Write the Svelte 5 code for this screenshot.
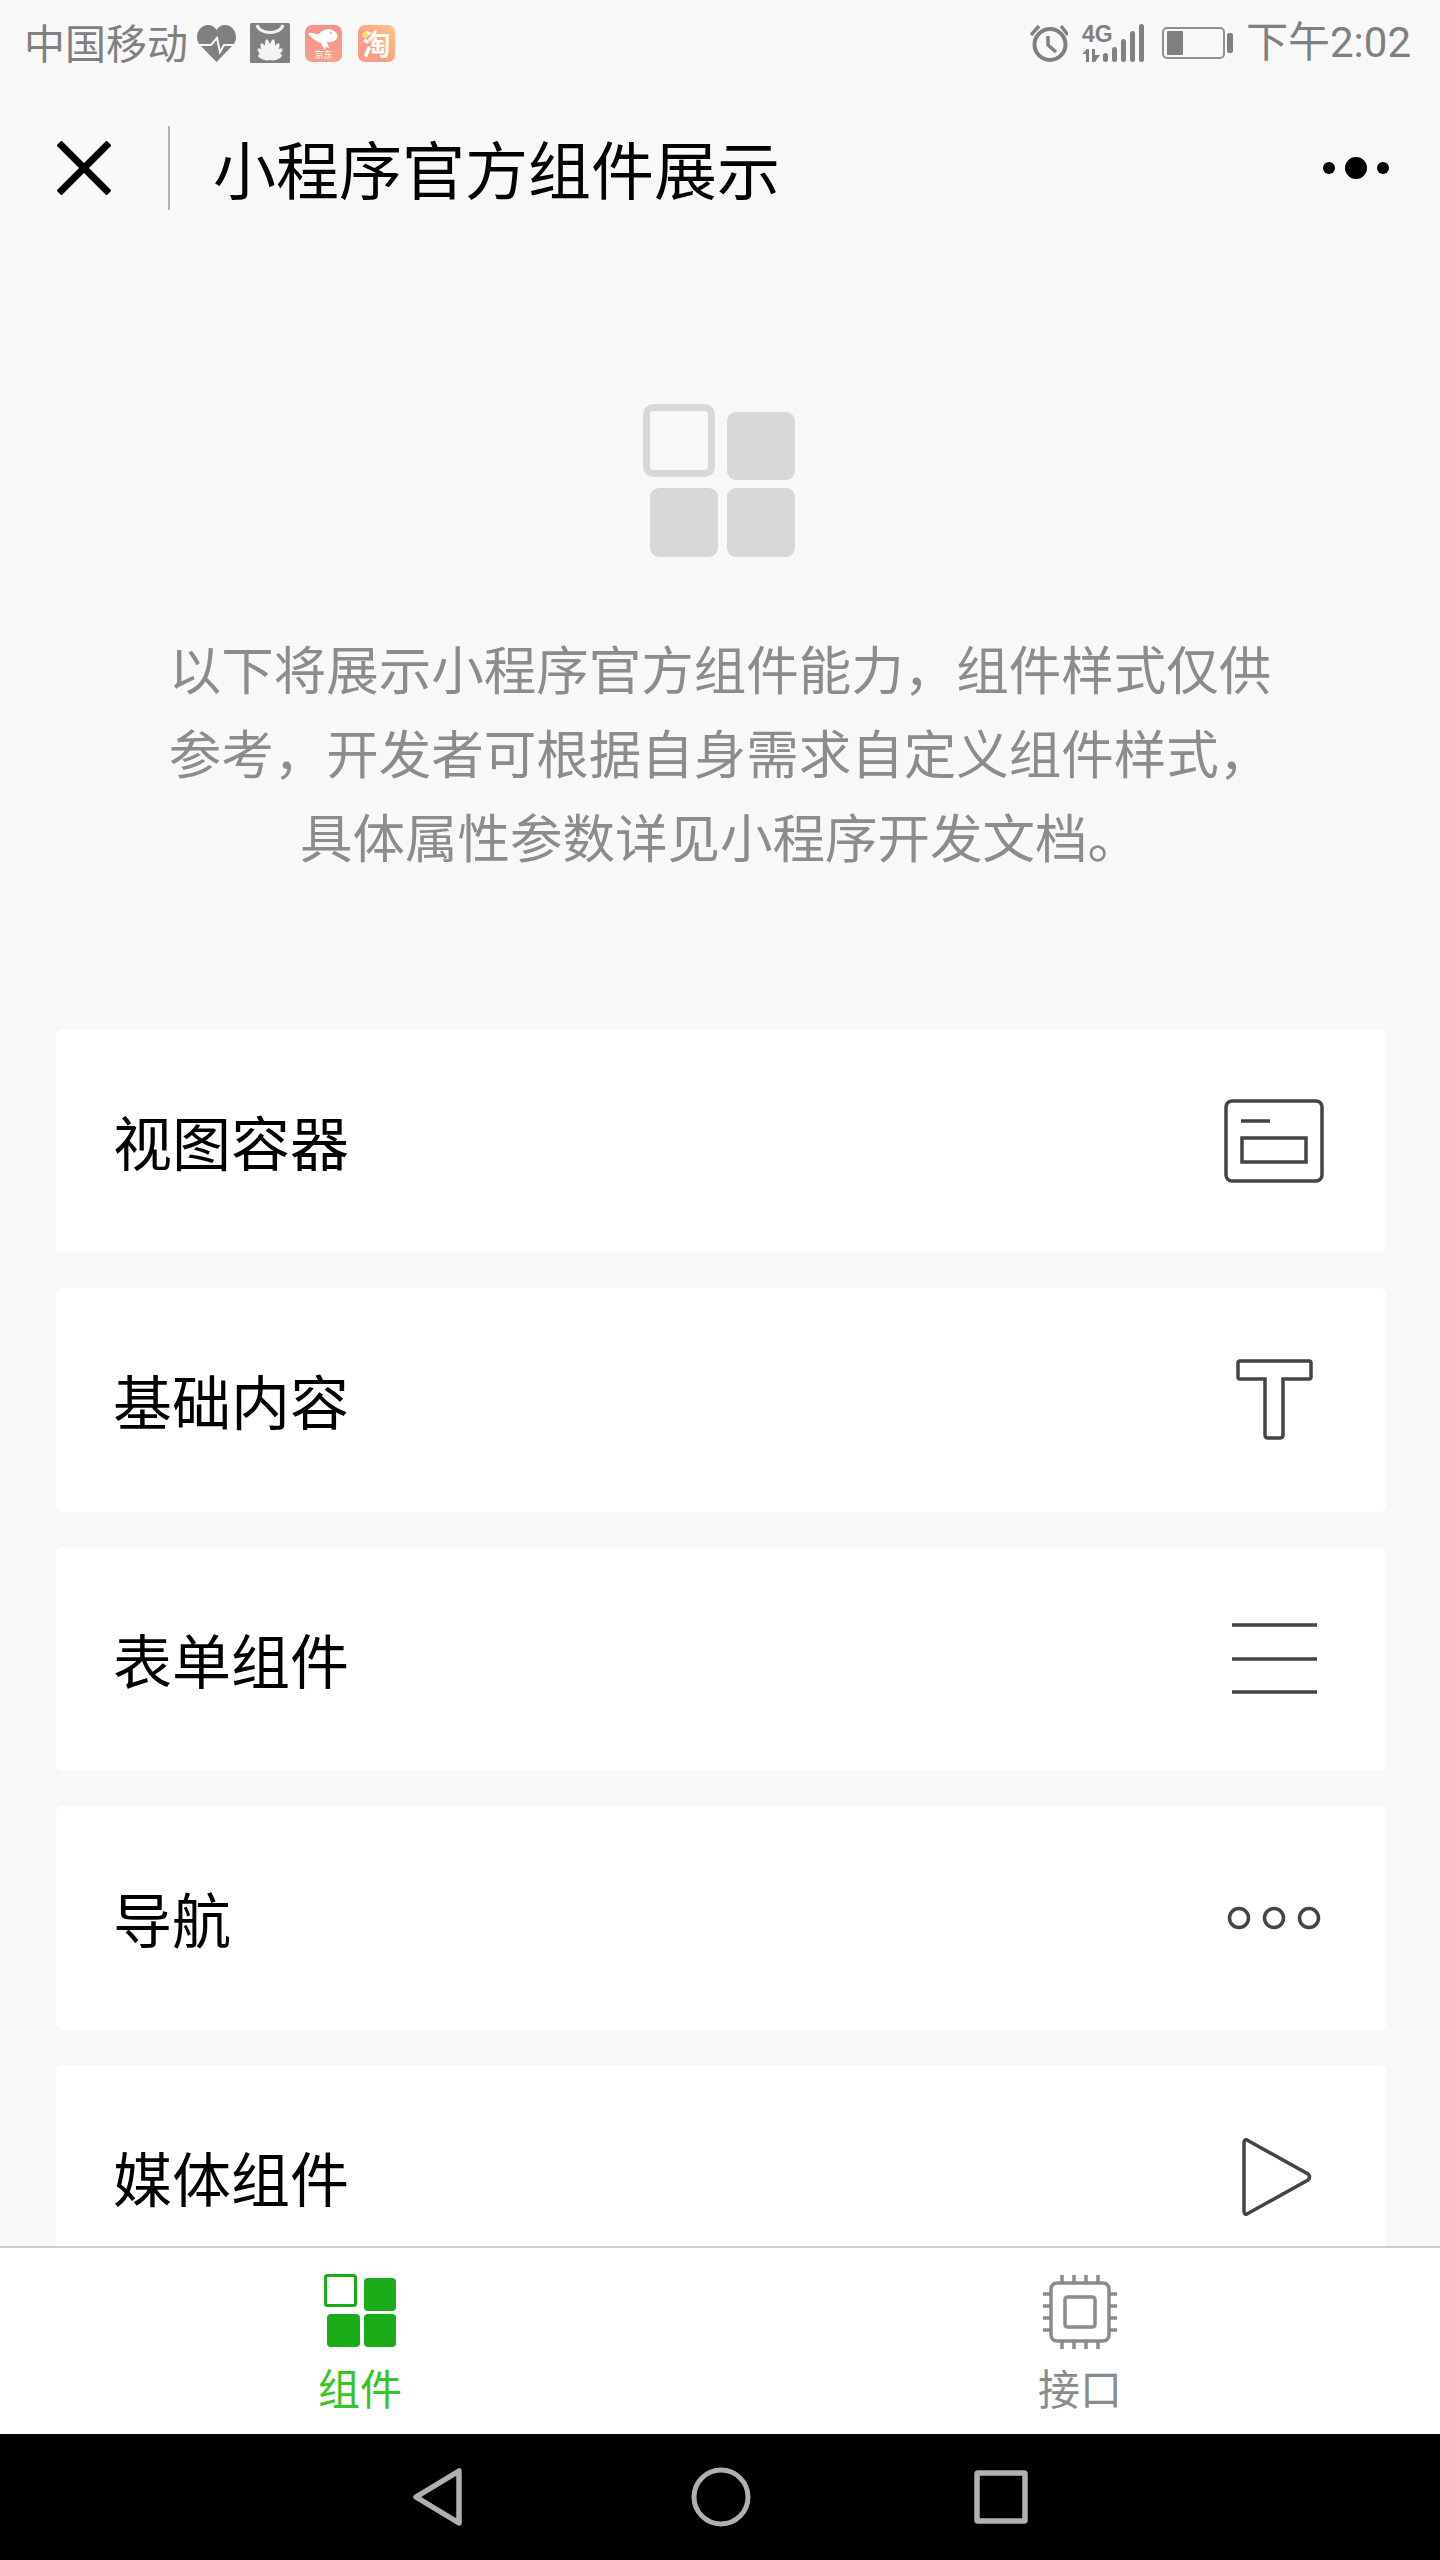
<script>
  const cards = [
    { name: '视图容器', icon: 'view' },
    { name: '基础内容', icon: 'text' },
    { name: '表单组件', icon: 'form' },
    { name: '导航', icon: 'nav' },
    { name: '媒体组件', icon: 'media' }
  ];
  const petals = [
    { a: -72, cy: 30, ry: 6.5 },
    { a: -50, cy: 28, ry: 8 },
    { a: -30, cy: 27, ry: 9 },
    { a: -10, cy: 26, ry: 10 },
    { a: 10, cy: 26, ry: 10 },
    { a: 30, cy: 27, ry: 9 },
    { a: 50, cy: 28, ry: 8 },
    { a: 72, cy: 30, ry: 6.5 }
  ];
</script>

<div class="page">
  <header class="status">
    <div class="status-left">
      <span class="carrier">中国移动</span>
      <svg class="s-heart" viewBox="0 0 39 37">
        <path d="M19.5 37 L2 19 C-3 11 2 0 11 0 C15 0 18 2 19.5 5 C21 2 24 0 28 0 C37 0 42 11 37 19 Z" fill="#808080" />
        <path d="M0 20 H14 L20 13 L23 27 L27 20 H39" fill="none" stroke="#f8f8f8" stroke-width="2" />
      </svg>
      <svg class="s-hw" viewBox="0 0 40 40">
        <rect width="40" height="40" rx="1.5" fill="#808080" />
        <path d="M7 2 C10 12 30 12 33 2" fill="none" stroke="#f4f4f4" stroke-width="3" />
        {#each petals as p}
          <ellipse cx="20" cy={p.cy} rx="2.8" ry={p.ry} fill="#f4f4f4" transform="rotate({p.a} 20 36)" />
        {/each}
      </svg>
      <div class="s-app jd">
        <svg viewBox="0 0 37 25">
          <path d="M3 9 C7 5 12 12 15 8 C19 3 29 3 32 9 C34 13 30 17 25 17 L22 17 L24 23 L21 22 L20 25 L18 22 L16 18 C12 17 8 14 3 9 Z" fill="#fff" />
          <circle cx="26" cy="8" r="1" fill="#f6968a" />
        </svg>
        <span>京东</span>
      </div>
      <div class="s-app tb"><i></i><span>淘</span></div>
    </div>
    <div class="status-right">
      <svg class="s-alarm" viewBox="0 0 38 38">
        <circle cx="20" cy="20.5" r="15.5" fill="none" stroke="#808080" stroke-width="4" />
        <path d="M18 12 V21 L26 28" fill="none" stroke="#808080" stroke-width="3.5" />
        <path d="M1 11 L9 2 M38 11 L31 2" stroke="#808080" stroke-width="3.5" />
      </svg>
      <div class="s-net">
        <div class="net-col">
          <span class="net-label">4G</span>
          <svg viewBox="0 0 20 13">
            <path d="M0 5 L5 0 H7 V13 H4 V5 Z M10 0 H13 V6 L18 6 L13 13 H10 Z" fill="#808080" />
          </svg>
        </div>
        <svg class="net-bars" viewBox="0 0 41 38">
          <g fill="#808080">
            <rect x="0" y="29" width="5" height="9" rx="2.5" />
            <rect x="9" y="23" width="5" height="15" rx="2.5" />
            <rect x="18" y="15" width="5" height="23" rx="2.5" />
            <rect x="27" y="7" width="5" height="31" rx="2.5" />
            <rect x="36" y="0" width="5" height="38" rx="2.5" />
          </g>
        </svg>
      </div>
      <div class="s-batt"><div class="batt-body"><div class="batt-fill"></div></div><div class="batt-tip"></div></div>
      <span class="clock">下午2:02</span>
    </div>
  </header>

  <nav class="topbar">
    <svg class="close" viewBox="0 0 54 54">
      <path d="M2 2 L52 52 M52 2 L2 52" stroke="#000" stroke-width="7" fill="none" />
    </svg>
    <div class="divider"></div>
    <div class="title">小程序官方组件展示</div>
    <div class="more"><i></i><b></b><i></i></div>
  </nav>

  <main class="content">
    <section class="intro">
      <svg class="logo" viewBox="0 0 152 153">
        <rect x="3.5" y="3.5" width="65" height="66" rx="7" fill="none" stroke="#d8d8d8" stroke-width="7" />
        <rect x="84" y="8" width="68" height="68" rx="9" fill="#d8d8d8" />
        <rect x="7" y="84" width="68" height="69" rx="9" fill="#d8d8d8" />
        <rect x="84" y="84" width="68" height="69" rx="9" fill="#d8d8d8" />
      </svg>
      <p class="desc">以下将展示小程序官方组件能力，组件样式仅供<br />参考，开发者可根据自身需求自定义组件样式，<br />具体属性参数详见小程序开发文档。</p>
    </section>

    <div class="list">
      {#each cards as card}
        <div class="card">
          <span class="name">{card.name}</span>
          <svg class="card-icon" viewBox="0 0 100 100" fill="none" stroke="#444" stroke-width="3.5">
            {#if card.icon === 'view'}
              <rect x="2" y="10" width="96" height="80" rx="6" />
              <path d="M17 30 H46" />
              <rect x="18" y="47" width="64" height="24" />
            {:else if card.icon === 'text'}
              <path d="M16 11 H85 Q87 11 87 13 V27 Q87 29 85 29 H59 V85 Q59 88 56 88 H44 Q41 88 41 85 V29 H16 Q14 29 14 27 V13 Q14 11 16 11 Z" />
            {:else if card.icon === 'form'}
              <path d="M8 16 H93 M8 50 H93 M8 83 H93" />
            {:else if card.icon === 'nav'}
              <circle cx="15" cy="50" r="9.5" />
              <circle cx="50" cy="50" r="9.5" />
              <circle cx="85" cy="50" r="9.5" />
            {:else}
              <path d="M23 13 L84 47 Q87 50 84 53 L23 87 Q20 88 20 84 V16 Q20 12 23 13 Z" />
            {/if}
          </svg>
        </div>
      {/each}
    </div>
  </main>

  <div class="tabbar">
    <div class="tab active">
      <svg viewBox="0 0 72 73">
        <rect x="1.5" y="1.5" width="30" height="30" rx="2" fill="none" stroke="#1aad19" stroke-width="3" />
        <rect x="40" y="4" width="32" height="33" rx="4" fill="#1aad19" />
        <rect x="3" y="40" width="33" height="33" rx="4" fill="#1aad19" />
        <rect x="40" y="40" width="32" height="33" rx="4" fill="#1aad19" />
      </svg>
      <span>组件</span>
    </div>
    <div class="tab">
      <svg viewBox="0 0 76 76" fill="none" stroke="#888c8f" stroke-width="3.5">
        <rect x="9" y="9" width="58" height="58" rx="6" />
        <rect x="23" y="23" width="30" height="30" rx="2.5" />
        <path d="M20 1 V8 M32 1 V8 M44 1 V8 M56 1 V8 M20 68 V75 M32 68 V75 M44 68 V75 M56 68 V75 M1 20 H8 M1 32 H8 M1 44 H8 M1 56 H8 M68 20 H75 M68 32 H75 M68 44 H75 M68 56 H75" />
      </svg>
      <span>接口</span>
    </div>
  </div>

  <footer class="sysnav">
    <svg class="sys-back" viewBox="0 0 52 60" fill="none" stroke="#b0b0b0" stroke-width="5.5" stroke-linejoin="round">
      <path d="M47 4 V56 L4 30 Z" />
    </svg>
    <svg class="sys-home" viewBox="0 0 60 60" fill="none" stroke="#b0b0b0" stroke-width="5">
      <circle cx="30" cy="30" r="27" />
    </svg>
    <svg class="sys-recent" viewBox="0 0 54 54" fill="none" stroke="#b0b0b0" stroke-width="5.5" stroke-linejoin="round">
      <rect x="3" y="3" width="48" height="48" rx="1" />
    </svg>
  </footer>
</div>

<style>
  :global(body) { margin: 0; }
  .page {
    width: 1440px; height: 2560px;
    display: flex; flex-direction: column;
    background: #f8f8f8; overflow: hidden;
    font-family: "Noto Sans CJK SC", "Liberation Sans", sans-serif;
  }

  .status { height: 86px; flex: none; display: flex; justify-content: space-between; align-items: center; padding: 0 29px 0 24px; color: #808080; }
  .status-left, .status-right { display: flex; align-items: center; }
  .carrier { font-size: 41px; line-height: 46px; margin-top: -4px; }
  .s-heart { width: 39px; height: 37px; margin-left: 9px; }
  .s-hw { width: 40px; height: 40px; margin-left: 14px; }
  .s-app { position: relative; width: 37px; height: 37px; margin-left: 15px; border-radius: 7px; display: flex; flex-direction: column; align-items: center; color: #fff; }
  .jd { background: linear-gradient(#f6928a, #f8a08e); }
  .jd svg { display: block; width: 37px; height: 25px; }
  .jd span { font-size: 9px; line-height: 10px; }
  .tb { background: linear-gradient(225deg, #fdc882, #fb9c85 60%); justify-content: center; font-size: 28px; line-height: 37px; font-weight: 700; margin-left: 16px; }
  .tb i { position: absolute; left: 4px; top: 7px; width: 6px; height: 6px; border-radius: 50%; background: #ffe36a; }
  .s-alarm { width: 38px; height: 38px; }
  .s-net { display: flex; align-items: flex-end; height: 38px; margin-left: 14px; }
  .net-col { display: flex; flex-direction: column; width: 21px; height: 38px; justify-content: space-between; }
  .net-col svg { display: block; width: 20px; height: 13px; }
  .net-label { font: bold 23px/20px "Liberation Sans Narrow", "Liberation Sans", sans-serif; }
  .net-bars { display: block; width: 41px; height: 38px; }
  .s-batt { display: flex; align-items: center; margin-left: 18px; }
  .batt-body { width: 63px; height: 32px; box-sizing: border-box; border: 2px solid #909090; border-radius: 5px; padding: 2px 3px; }
  .batt-fill { width: 16px; height: 100%; background: #808080; border-radius: 1px; }
  .batt-tip { width: 6px; height: 20px; background: #808080; margin-left: 2px; border-radius: 2px; }
  .clock { font-size: 42px; line-height: 46px; margin-left: 13px; font-family: "Roboto", "Noto Sans CJK SC", sans-serif; }

  .topbar { height: 164px; flex: none; display: flex; align-items: center; padding: 0 51px 0 57px; }
  .close { width: 54px; height: 54px; flex: none; }
  .divider { width: 2px; height: 84px; background: #b4b4b4; margin-left: 57px; flex: none; }
  .title { font-size: 63px; line-height: 84px; margin: -3px 0 0 43px; color: #000; flex: 1; }
  .more { display: flex; align-items: center; gap: 10px; }
  .more i { width: 12px; height: 12px; background: #000; border-radius: 50%; }
  .more b { width: 22px; height: 22px; background: #000; border-radius: 50%; }

  .content { flex: 1; min-height: 0; overflow: hidden; }
  .intro { display: flex; flex-direction: column; align-items: center; padding-top: 154px; }
  .logo { width: 152px; height: 153px; display: block; margin-right: 2px; }
  .desc { margin: 68px 0 0; font-size: 52.5px; line-height: 84px; color: #8c8c8c; text-align: center; white-space: nowrap; }
  .list { display: flex; flex-direction: column; gap: 35px; padding: 152px 54px 0 56px; }
  .card { height: 224px; flex: none; background: #fff; border-radius: 6px; display: flex; justify-content: space-between; align-items: center; padding: 0 62px 0 57px; }
  .name { font-size: 59px; line-height: 80px; color: #000; }
  .card-icon { width: 100px; height: 100px; flex: none; }

  .tabbar { height: 188px; flex: none; box-sizing: border-box; background: #fff; border-top: 2px solid #ccc; display: flex; }
  .tab { flex: 1; display: flex; flex-direction: column; align-items: center; padding-top: 26px; font-size: 42px; line-height: 50px; color: #888c8f; }
  .tab svg { width: 76px; height: 76px; margin-bottom: 12px; }
  .tab.active { color: #34c724; }
  .tab.active svg { width: 72px; height: 73px; margin-bottom: 15px; }

  .sysnav { height: 126px; flex: none; background: #000; display: flex; align-items: center; justify-content: center; }
  .sys-back { width: 52px; height: 60px; margin-right: 227px; }
  .sys-home { width: 60px; height: 60px; margin-right: 223px; }
  .sys-recent { width: 54px; height: 54px; }
</style>
